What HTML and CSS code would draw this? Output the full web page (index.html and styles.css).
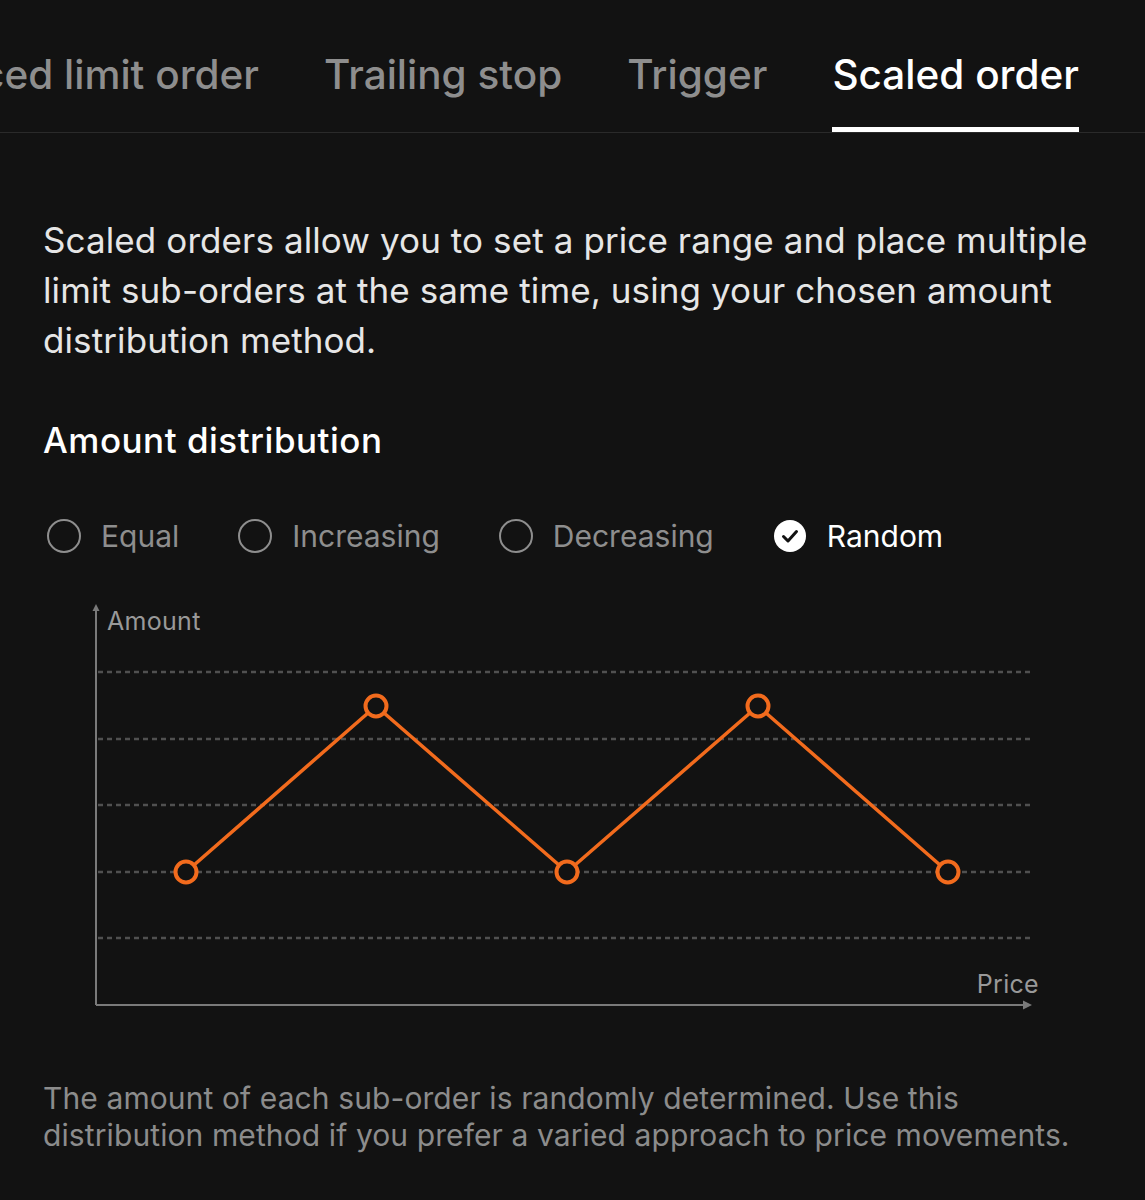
FILE: index.html
```html
<!DOCTYPE html>
<html lang="en">
<head>
<meta charset="utf-8">
<title>Scaled order</title>
<link rel="stylesheet" href="styles.css">
</head>
<body>
<nav class="tabs">
  <div class="tab-list">
    <div class="tab">Advanced limit order</div>
    <div class="tab">Trailing stop</div>
    <div class="tab">Trigger</div>
    <div class="tab active">Scaled order</div>
  </div>
</nav>
<main class="content">
  <p class="desc">Scaled orders allow you to set a price range and place multiple limit sub-orders at the same time, using your chosen amount distribution method.</p>
  <h2 class="heading">Amount distribution</h2>
  <div class="options">
    <div class="option"><span class="radio"></span><span class="opt-label">Equal</span></div>
    <div class="option"><span class="radio"></span><span class="opt-label">Increasing</span></div>
    <div class="option"><span class="radio"></span><span class="opt-label">Decreasing</span></div>
    <div class="option selected">
      <svg class="check" width="34" height="34" viewBox="0 0 34 34"><circle cx="17" cy="17" r="16" fill="#fff"/><path d="M10.5 17.5 L15 22 L23.5 12.5" fill="none" stroke="#121212" stroke-width="3" stroke-linecap="round" stroke-linejoin="round"/></svg>
      <span class="opt-label">Random</span>
    </div>
  </div>
  <div class="chart">
    <svg width="1000" height="425" viewBox="0 0 1000 425">
      <g stroke="#505050" stroke-width="2.5" stroke-dasharray="5 4">
        <line x1="55" y1="77" x2="987" y2="77"/>
        <line x1="55" y1="144" x2="987" y2="144"/>
        <line x1="55" y1="210" x2="987" y2="210"/>
        <line x1="55" y1="277" x2="987" y2="277"/>
        <line x1="55" y1="343" x2="987" y2="343"/>
      </g>
      <g stroke="#7a7a7a" stroke-width="2" fill="none">
        <line x1="53" y1="14" x2="53" y2="410"/>
        <line x1="53" y1="410" x2="982" y2="410"/>
      </g>
      <path d="M53 9 L56.5 16 L49.5 16 Z" fill="#7a7a7a"/>
      <path d="M989 410 L980 405.5 L980 414.5 Z" fill="#7a7a7a"/>
      <polyline points="143,277 333,111 524,277 715,111 905,277" fill="none" stroke="#f26b1d" stroke-width="3.5" stroke-linejoin="miter"/>
      <g fill="#121212" stroke="#f26b1d" stroke-width="4">
        <circle cx="143" cy="277" r="10.5"/>
        <circle cx="333" cy="111" r="10.5"/>
        <circle cx="524" cy="277" r="10.5"/>
        <circle cx="715" cy="111" r="10.5"/>
        <circle cx="905" cy="277" r="10.5"/>
      </g>
      <text class="axis-label" x="64" y="35">Amount</text>
      <text class="axis-label" x="996" y="398" text-anchor="end">Price</text>
    </svg>
  </div>
  <p class="note">The amount of each sub-order is randomly determined. Use this distribution method if you prefer a varied approach to price movements.</p>
</main>
</body>
</html>
```
FILE: styles.css
```css
* { box-sizing: border-box; }
html, body {
  margin: 0;
  padding: 0;
  background: #121212;
}
body {
  width: 1145px;
  height: 1200px;
  overflow: hidden;
  font-family: Inter, "Liberation Sans", Arial, sans-serif;
  color: #e8e8e8;
}
.tabs {
  height: 133px;
  border-bottom: 1px solid #2a2a2a;
  overflow: hidden;
}
.tab-list {
  display: flex;
  justify-content: flex-end;
  gap: 65px;
  padding-right: 66px;
  height: 132px;
}
.tab {
  flex: none;
  white-space: nowrap;
  font-size: 40.5px;
  font-weight: 500;
  color: #8e8e8e;
  padding-top: 50px;
  line-height: 50px;
  height: 132px;
}
.tab.active {
  color: #ffffff;
  border-bottom: 5px solid #ffffff;
}
.content {
  padding: 0 43px;
}
.desc {
  margin: 82px 0 0;
  font-size: 35px;
  line-height: 50px;
  color: #e6e6e6;
  letter-spacing: 0.1px;
}
.heading {
  margin: 50px 0 0;
  font-size: 35px;
  font-weight: 500;
  line-height: 50px;
  color: #ffffff;
  letter-spacing: 0.5px;
}
.options {
  display: flex;
  align-items: center;
  gap: 59px;
  margin-top: 51px;
  padding-left: 4px;
  height: 40px;
}
.option {
  display: flex;
  align-items: center;
  gap: 20px;
}
.radio {
  width: 34px;
  height: 34px;
  border-radius: 50%;
  border: 2.5px solid #8e8e8e;
}
.opt-label {
  font-size: 30px;
  color: #8e8e8e;
}
.selected .opt-label {
  color: #ffffff;
}
.chart {
  margin-top: 39px;
  height: 425px;
}
.chart svg { display: block; }
.axis-label {
  font-family: Inter, "Liberation Sans", Arial, sans-serif;
  font-size: 25px;
  letter-spacing: 0.3px;
  fill: #999999;
}
.note {
  margin: 60px 0 0;
  max-width: 1040px;
  font-size: 30px;
  line-height: 37px;
  letter-spacing: 0.1px;
  color: #8c8c8c;
}
```
